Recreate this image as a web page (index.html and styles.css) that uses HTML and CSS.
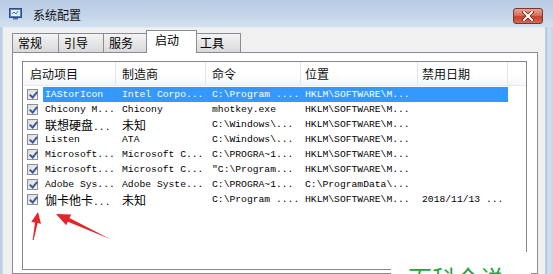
FILE: index.html
```html
<!DOCTYPE html>
<html lang="zh-CN">
<head>
<meta charset="utf-8">
<title>系统配置</title>
<link rel="stylesheet" href="styles.css">
</head>
<body>
<div class="window">
  <div class="titlebar">
    <svg class="appicon" width="13" height="12" viewBox="0 0 13 12">
      <rect x="0.5" y="0.5" width="12" height="9" fill="#5b7fb8" stroke="#2e4e86"/>
      <rect x="2" y="2" width="9" height="6" fill="#e8f0fb"/>
      <path d="M3 6 L5 4 L7 6 L9 3" stroke="#3d6fc0" stroke-width="1" fill="none"/>
      <rect x="4" y="10" width="5" height="1.5" fill="#5b6f8f"/>
    </svg>
    <span class="title">系统配置</span>
    <div class="close">
      <svg width="12" height="10" viewBox="0 0 12 10">
        <path d="M2 1 L10 9 M10 1 L2 9" stroke="#5a1f18" stroke-width="3.4" stroke-linecap="square"/>
        <path d="M2 1 L10 9 M10 1 L2 9" stroke="#ffffff" stroke-width="2" stroke-linecap="square"/>
      </svg>
    </div>
  </div>
  <div class="client">
    <div class="tabs">
      <div class="tab first">常规</div>
      <div class="tab w46">引导</div>
      <div class="tab w46">服务</div>
      <div class="tab selected">启动</div>
      <div class="tab after">工具</div>
    </div>
    <div class="panel">
      <div class="list">
        <div class="header">
          <div class="hc c1">启动项目</div>
          <div class="hc c2">制造商</div>
          <div class="hc c3">命令</div>
          <div class="hc c4">位置</div>
          <div class="hc c5">禁用日期</div>
          <div class="hc c6"></div>
        </div>
        <div class="row">
          <span class="cb"></span>
          <div class="cells sel">
            <span class="d1">IAStorIcon</span><span class="d2">Intel Corpo...</span><span class="d3">C:\Program ....</span><span class="d4">HKLM\SOFTWARE\M...</span><span class="d5"></span>
          </div>
        </div>
        <div class="row">
          <span class="cb"></span>
          <div class="cells">
            <span class="d1">Chicony M...</span><span class="d2">Chicony</span><span class="d3">mhotkey.exe</span><span class="d4">HKLM\SOFTWARE\M...</span><span class="d5"></span>
          </div>
        </div>
        <div class="row">
          <span class="cb"></span>
          <div class="cells">
            <span class="d1"><span class="cj">联想硬盘</span>...</span><span class="d2"><span class="cj">未知</span></span><span class="d3">C:\Windows\...</span><span class="d4">HKLM\SOFTWARE\M...</span><span class="d5"></span>
          </div>
        </div>
        <div class="row">
          <span class="cb"></span>
          <div class="cells">
            <span class="d1">Listen</span><span class="d2">ATA</span><span class="d3">C:\Windows\...</span><span class="d4">HKLM\SOFTWARE\M...</span><span class="d5"></span>
          </div>
        </div>
        <div class="row">
          <span class="cb"></span>
          <div class="cells">
            <span class="d1">Microsoft...</span><span class="d2">Microsoft C...</span><span class="d3">C:\PROGRA~1...</span><span class="d4">HKLM\SOFTWARE\M...</span><span class="d5"></span>
          </div>
        </div>
        <div class="row">
          <span class="cb"></span>
          <div class="cells">
            <span class="d1">Microsoft...</span><span class="d2">Microsoft C...</span><span class="d3">"C:\Program...</span><span class="d4">HKLM\SOFTWARE\M...</span><span class="d5"></span>
          </div>
        </div>
        <div class="row">
          <span class="cb"></span>
          <div class="cells">
            <span class="d1">Adobe Sys...</span><span class="d2">Adobe Syste...</span><span class="d3">C:\PROGRA~1...</span><span class="d4">C:\ProgramData\...</span><span class="d5"></span>
          </div>
        </div>
        <div class="row">
          <span class="cb"></span>
          <div class="cells">
            <span class="d1"><span class="cj">伽卡他卡</span>...</span><span class="d2"><span class="cj">未知</span></span><span class="d3">C:\Program ....</span><span class="d4">HKLM\SOFTWARE\M...</span><span class="d5">2018/11/13 ...</span>
          </div>
        </div>
      </div>
    </div>
  </div>

  <svg class="arrows" width="553" height="274" viewBox="0 0 553 274">
    <polygon fill="#e3262b" points="38,212 41,223.7 37.6,222.9 33.6,240 32.6,240 35,222.5 31.2,221.9"/>
    <polygon fill="#e3262b" points="56,214 71.2,214.5 69.5,218.1 110,239 67.9,221.7 66.2,225.3"/>
  </svg>
  <div class="watermark">百科全说</div>
</div>
</body>
</html>
```
FILE: styles.css
```css
html, body {
  margin: 0;
  padding: 0;
}
body {
  width: 553px;
  height: 274px;
  overflow: hidden;
  font-family: "Noto Sans CJK SC", "Liberation Sans", sans-serif;
}
.window {
  position: relative;
  width: 553px;
  height: 274px;
  overflow: hidden;
  display: flex;
  flex-direction: column;
  background: linear-gradient(90deg, #b7cbe3 0, #c9daee 3px, #c9daee 545px, #a9bfdc 546px, #d2e1f2 548px, #c3d6ec 553px);
}
.titlebar {
  height: 27px;
  flex: none;
  display: flex;
  align-items: center;
  padding-left: 9px;
  background: linear-gradient(#b8cbe3, #c5d6ea 60%, #d3e0ef);
}
.appicon {
  margin-right: 11px;
  margin-top: 1px;
}
.title {
  font-size: 12px;
  line-height: 14px;
  color: #111;
  margin-top: 2px;
}
.close {
  margin-left: auto;
  margin-right: 10px;
  align-self: flex-start;
  margin-top: 8px;
  width: 30px;
  height: 16px;
  box-sizing: border-box;
  border: 1px solid #7a3429;
  border-radius: 3px;
  background: linear-gradient(#e9a597, #d8705f 45%, #c8412d 55%, #d26a52);
  display: flex;
  align-items: center;
  justify-content: center;
}
.client {
  flex: 1;
  margin: 0 8px 0 3px;
  background: #f0f0f0;
  padding-left: 9px;
  display: flex;
  flex-direction: column;
  border-top: 1px solid #e4ebf4;
}
.tabs {
  height: 24px;
  flex: none;
  display: flex;
  align-items: flex-end;
  font-size: 12px;
}
.tab {
  height: 19px;
  box-sizing: border-box;
  border: 1px solid #898c95;
  border-bottom: none;
  background: linear-gradient(#f3f3f3, #e6e6e6 50%, #dadada);
  color: #000;
  line-height: 17px;
  padding-left: 5px;
  margin-left: -1px;
  position: relative;
}
.tab.first {
  margin-left: 0;
  width: 47px;
}
.tab.w46 {
  width: 46px;
}
.tab.selected {
  width: 51px;
  height: 23px;
  margin-left: -3px;
  margin-right: -2px;
  margin-bottom: -1px;
  background: #ffffff;
  padding-left: 8px;
  line-height: 18px;
  z-index: 2;
}
.tab.after {
  width: 47px;
  margin-left: -1px;
  z-index: 1;
}
.panel {
  flex: 1;
  background: #ffffff;
  border: 1px solid #898c95;
  margin-right: 7px;
  padding: 8px 10px 0 9px;
}
.list {
  height: 209px;
  box-sizing: border-box;
  border: 1px solid #828790;
  background: #ffffff;
}
.header {
  display: flex;
  height: 23px;
  border-bottom: 1px solid #eaeaea;
  background: linear-gradient(#ffffff, #ffffff 50%, #f6f7f9);
  font-size: 12px;
  color: #111;
  margin-bottom: 1px;
}
.hc {
  box-sizing: border-box;
  border-right: 1px solid #e3e5e8;
  line-height: 23px;
  padding-left: 6px;
  white-space: nowrap;
  overflow: hidden;
}
.hc.c1 { width: 93px; padding-left: 7px; }
.hc.c2 { width: 90px; }
.hc.c3 { width: 95px; }
.hc.c4 { width: 117px; padding-left: 4px; }
.hc.c5 { width: 90px; padding-left: 4px; }
.hc.c6 { flex: 1; border-right: none; }

.row {
  display: flex;
  height: 15px;
  line-height: 15px;
  font-family: "Liberation Mono", "Noto Sans CJK SC", monospace;
  font-size: 9.7px;
  color: #000;
}
.cb {
  flex: none;
  width: 11px;
  height: 11px;
  margin: 2px 0 0 4px;
  box-sizing: border-box;
  border: 1px solid #8e8f8f;
  background: linear-gradient(135deg, #dcdcdc, #f6f6f6);
  position: relative;
  margin-right: 5px;
}
.cb::after {
  content: "";
  position: absolute;
  left: 3px;
  top: 0px;
  width: 3px;
  height: 6px;
  border-right: 2px solid #3b5a9a;
  border-bottom: 2px solid #3b5a9a;
  transform: rotate(40deg);
}
.cells {
  display: flex;
  white-space: nowrap;
}
.cells.sel {
  background: #3399ff;
  color: #ffffff;
}
.cells > span {
  display: block;
  overflow: hidden;
  box-sizing: border-box;
}
.d1 { width: 73px; padding-left: 2px; }
.d2 { width: 90px; padding-left: 6px; }
.d3 { width: 95px; padding-left: 6px; }
.d4 { width: 117px; padding-left: 4px; }
.d5 { width: 90px; padding-left: 4px; }
.cj {
  font-family: "Noto Sans CJK SC", sans-serif;
  font-size: 12px;
}
.arrows {
  position: absolute;
  left: 0;
  top: 0;
  pointer-events: none;
}
.watermark {
  position: absolute;
  left: 391px;
  top: 252px;
  width: 140px;
  height: 30px;
  background: #ffffff;
  color: #1fa53a;
  font-size: 24px;
  line-height: 24px;
  padding: 14px 0 0 17px;
  box-sizing: border-box;
  font-family: "Noto Sans CJK SC", sans-serif;
  letter-spacing: 0px;
}
```
